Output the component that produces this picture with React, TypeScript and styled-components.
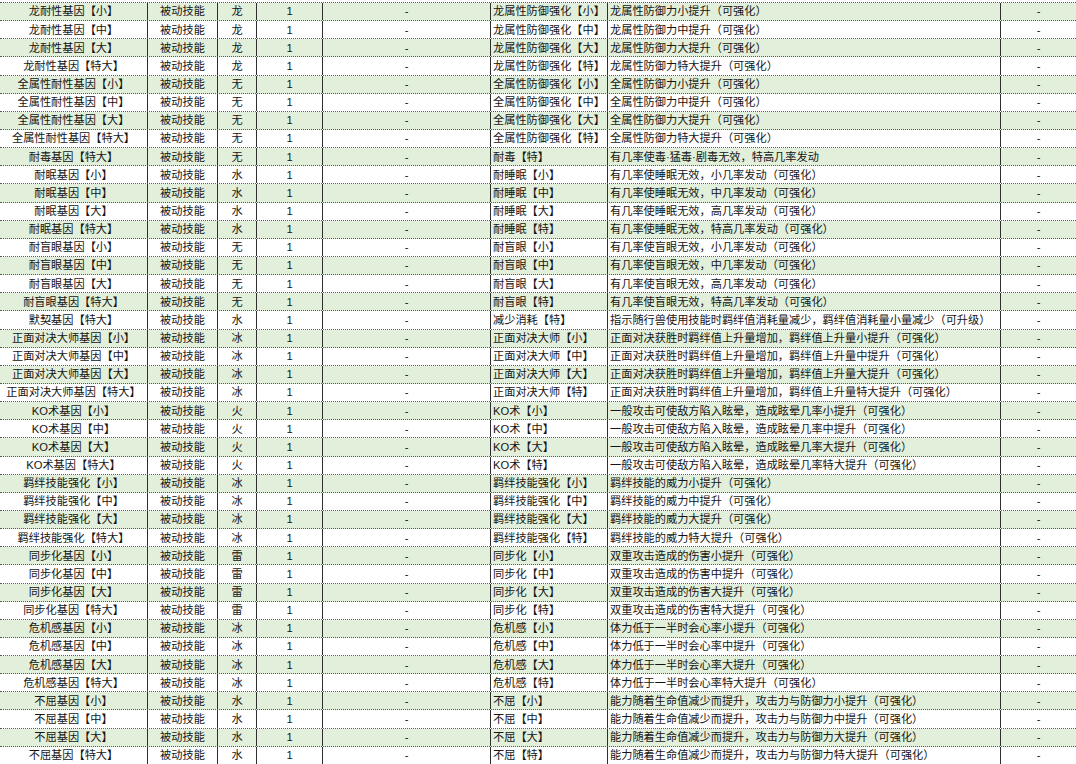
import React from "react";
import styled, { createGlobalStyle } from "styled-components";

const Global = createGlobalStyle`
  html, body { margin: 0; padding: 0; background: #ffffff; }
  body { font-family: "Liberation Sans", "Noto Sans CJK SC", sans-serif; }
`;

const COLS = "148px 70px 39px 66px 168px 117px 393px 75px";

const Sheet = styled.div`
  width: 1076px;
  height: 764px;
  overflow: hidden;
  padding-top: 2px;
  box-sizing: border-box;
  background: #ffffff;
`;

const TopEdge = styled.div`
  height: 0;
  border-top: 1px dotted #5a5a5a;
`;

const Row = styled.div<{ $shade: boolean }>`
  display: grid;
  grid-template-columns: ${COLS};
  height: 18.15px;
  box-sizing: border-box;
  background: ${(p) => (p.$shade ? "#e2efda" : "#ffffff")};
  border-bottom: 1px dotted #5a5a5a;
`;

const Cell = styled.div<{ $align?: "left" | "center"; $last?: boolean }>`
  display: flex;
  align-items: center;
  justify-content: ${(p) => (p.$align === "left" ? "flex-start" : "center")};
  padding-left: ${(p) => (p.$align === "left" ? "2px" : "0")};
  padding-top: 1px;
  box-sizing: border-box;
  border-right: ${(p) => (p.$last ? "0" : "1px solid #2e2e2e")};
  font-family: "Liberation Sans", "Noto Sans CJK SC", sans-serif;
  font-size: 11.2px;
  line-height: 1;
  color: #141414;
  white-space: nowrap;
  overflow: hidden;
`;

type R = [string, string, string, string];

const sizes = ["小", "中", "大", "特大"];
const shortSizes = ["小", "中", "大", "特"];
const lvl = ["小", "中", "大", "特大"];
const chance = ["小", "中", "高", "特高"];

const rows: R[] = [];
const group = (
  gene: (i: number) => string,
  elem: string,
  skill: (i: number) => string,
  desc: (i: number) => string
) => {
  for (let i = 0; i < 4; i++) rows.push([gene(i), elem, skill(i), desc(i)]);
};

group(
  (i) => `龙耐性基因【${sizes[i]}】`,
  "龙",
  (i) => `龙属性防御强化【${shortSizes[i]}】`,
  (i) => `龙属性防御力${lvl[i]}提升（可强化）`
);
group(
  (i) => `全属性耐性基因【${sizes[i]}】`,
  "无",
  (i) => `全属性防御强化【${shortSizes[i]}】`,
  (i) => `全属性防御力${lvl[i]}提升（可强化）`
);
rows.push(["耐毒基因【特大】", "无", "耐毒【特】", "有几率使毒·猛毒·剧毒无效，特高几率发动"]);
group(
  (i) => `耐眠基因【${sizes[i]}】`,
  "水",
  (i) => `耐睡眠【${shortSizes[i]}】`,
  (i) => `有几率使睡眠无效，${chance[i]}几率发动（可强化）`
);
group(
  (i) => `耐盲眼基因【${sizes[i]}】`,
  "无",
  (i) => `耐盲眼【${shortSizes[i]}】`,
  (i) => `有几率使盲眼无效，${chance[i]}几率发动（可强化）`
);
rows.push([
  "默契基因【特大】",
  "水",
  "减少消耗【特】",
  "指示随行兽使用技能时羁绊值消耗量减少，羁绊值消耗量小量减少（可升级）",
]);
group(
  (i) => `正面对决大师基因【${sizes[i]}】`,
  "冰",
  (i) => `正面对决大师【${shortSizes[i]}】`,
  (i) => `正面对决获胜时羁绊值上升量增加，羁绊值上升量${lvl[i]}提升（可强化）`
);
group(
  (i) => `KO术基因【${sizes[i]}】`,
  "火",
  (i) => `KO术【${shortSizes[i]}】`,
  (i) => `一般攻击可使敌方陷入眩晕，造成眩晕几率${lvl[i]}提升（可强化）`
);
group(
  (i) => `羁绊技能强化【${sizes[i]}】`,
  "冰",
  (i) => `羁绊技能强化【${shortSizes[i]}】`,
  (i) => `羁绊技能的威力${lvl[i]}提升（可强化）`
);
group(
  (i) => `同步化基因【${sizes[i]}】`,
  "雷",
  (i) => `同步化【${shortSizes[i]}】`,
  (i) => `双重攻击造成的伤害${lvl[i]}提升（可强化）`
);
group(
  (i) => `危机感基因【${sizes[i]}】`,
  "冰",
  (i) => `危机感【${shortSizes[i]}】`,
  (i) => `体力低于一半时会心率${lvl[i]}提升（可强化）`
);
group(
  (i) => `不屈基因【${sizes[i]}】`,
  "水",
  (i) => `不屈【${shortSizes[i]}】`,
  (i) => `能力随着生命值减少而提升，攻击力与防御力${lvl[i]}提升（可强化）`
);

export default function App() {
  return (
    <>
      <Global />
      <Sheet>
        <TopEdge />
        {rows.map((r, idx) => (
          <Row key={idx} $shade={idx % 2 === 0}>
            <Cell>{r[0]}</Cell>
            <Cell>被动技能</Cell>
            <Cell>{r[1]}</Cell>
            <Cell>1</Cell>
            <Cell>-</Cell>
            <Cell $align="left">{r[2]}</Cell>
            <Cell $align="left">{r[3]}</Cell>
            <Cell $last>-</Cell>
          </Row>
        ))}
      </Sheet>
    </>
  );
}
